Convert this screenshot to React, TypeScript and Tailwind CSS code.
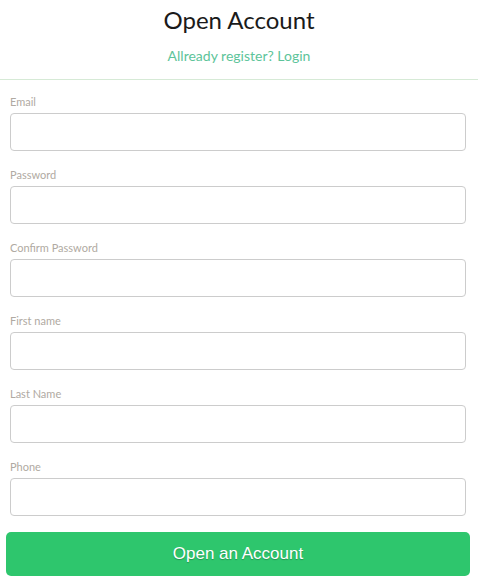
import React from 'react';

const fields = ['Email', 'Password', 'Confirm Password', 'First name', 'Last Name', 'Phone'];

export default function App() {
  return (
    <div className="w-[478px] h-[587px] bg-white font-['Lato',sans-serif]">
      <div className="border-b border-[#d6ead6] pb-[13px]">
        <h1 className="text-center text-[24px] leading-[28px] pt-[6px] text-[#1a1a1a] font-normal">Open Account</h1>
        <p className="text-center text-[14px] leading-[20px] mt-[12px] text-[#5dc49a]">
          Allready register? <a className="text-[#5dc49a]">Login</a>
        </p>
      </div>

      <form className="px-[10px] pt-[15px] flex flex-col gap-[17px]">
        {fields.map((f) => (
          <div key={f}>
            <label className="block text-[11px] leading-[14px] text-[#b0aaa2] mb-[4px]">{f}</label>
            <input
              type="text"
              className="block w-[456px] h-[38px] rounded-[4px] border border-[#cccccc] px-2 text-sm outline-none"
            />
          </div>
        ))}
      </form>

      <div className="px-[6px] mt-[16px]">
        <button
          type="button"
          className="w-[464px] h-[44px] rounded-[5px] bg-[#2ec66d] text-white text-[17px] font-['Liberation_Sans',sans-serif] [text-shadow:0_1px_1px_rgba(0,0,0,0.25)]"
        >
          Open an Account
        </button>
      </div>
    </div>
  );
}
